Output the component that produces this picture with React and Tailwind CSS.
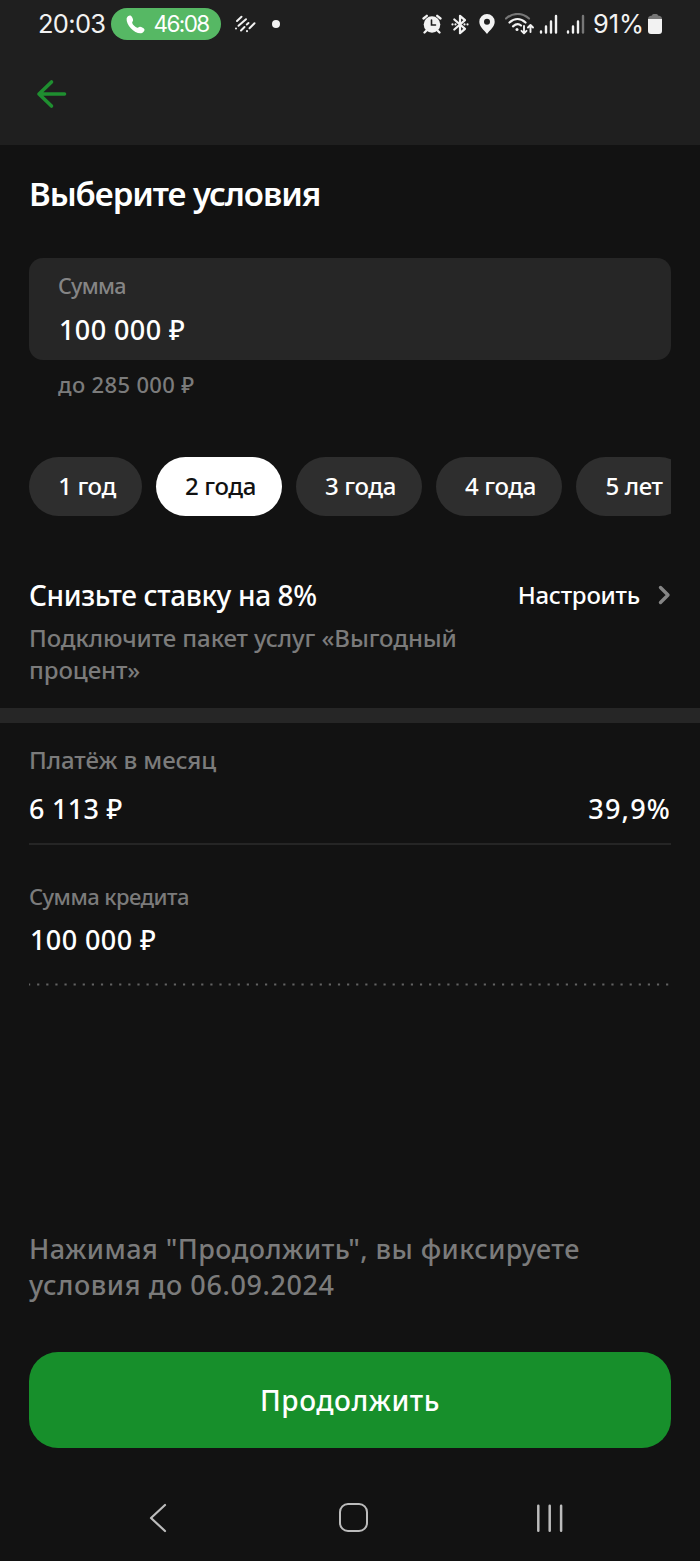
import React from "react";

const chips = [
  { label: "1 год", box: "w-[113px] bg-[#2e2e2e] text-white" },
  { label: "2 года", box: "w-[126px] bg-white text-[#111]" },
  { label: "3 года", box: "w-[126px] bg-[#2e2e2e] text-white" },
  { label: "4 года", box: "w-[126px] bg-[#2e2e2e] text-white" },
  { label: "5 лет", box: "w-[113px] bg-[#2e2e2e] text-white" },
];

function StatusBar() {
  return (
    <div className="flex h-12 items-center pl-[38px] font-['Inter','Roboto',sans-serif] font-normal text-[#f2f2f2]">
      <span className="w-[67px] text-[25.5px] leading-8 tracking-[-0.7px]">20:03</span>
      <div className="ml-[6px] flex h-8 w-[110px] items-center rounded-full bg-[#56b864] pl-[15px] text-white">
        <svg className="h-[19px] w-[19px]" viewBox="0 0 19 19" fill="currentColor">
          <path d="M.6 3.400C1.200 1.500 3 .200 4.500.600C5.900 1.200 7 3.700 7.100 5.100C7.200 6.400 6 7 6.200 7.900C6.800 9.700 9.200 12.100 11.200 12.800C12.200 13 12.900 11.600 14 11.700C15.400 11.800 18.200 13.200 18.500 14.500C18.700 16 17 17.900 15.300 18.200C8.500 19 0 9.800.6 3.400Z" />
        </svg>
        <span className="ml-[8.5px] text-[22.5px] leading-8 tracking-[-1.600px]">46:08</span>
      </div>
      <svg className="ml-[13px] h-[18px] w-[22px]" viewBox="0 0 22 18" fill="none" stroke="currentColor" strokeWidth="2" strokeLinecap="round">
        <path d="M3 6L7.500 1.800M2 13.500V13.400M4.500 10.800L12 4.200M7 15.500L10.500 12M12.800 9.500L14.500 8M13 16.200V16.100M15.500 13.200L20.500 8.200" />
      </svg>
      <div className="ml-4 h-2 w-2 rounded-full bg-[#f2f2f2]" />
      <svg className="ml-[142px] h-5 w-5" viewBox="0 0 20 20" fill="none" stroke="currentColor" strokeLinecap="round">
        <circle cx="10" cy="10.500" r="8.300" fill="currentColor" stroke="none" />
        <path d="M1.500 4.500L4.800 1.800M18.500 4.500L15.200 1.800M2.500 18.500L4.500 16.500M17.500 18.500L15.500 16.500" strokeWidth="2.300" />
        <path d="M9.500 6V11H13.500" stroke="#1f1f1f" strokeWidth="1.600" />
      </svg>
      <svg className="ml-[9px] h-[21px] w-[18px]" viewBox="0 0 18 21" fill="none" stroke="currentColor" strokeWidth="2.200" strokeLinecap="round" strokeLinejoin="round">
        <path d="M3.300 5.500L14 14.800L9 19.200V1.800L14 6.200L3.300 15.500M1.500 10.500V10.400M4.500 10.500V10.400M13.500 10.500V10.400M16.500 10.500V10.400" />
      </svg>
      <svg className="ml-[10px] h-5 w-4" viewBox="0 0 16 20" fill="currentColor">
        <path fillRule="evenodd" d="M8 0A7.700 7.700 0 0 0 .3 7.700C.3 12.500 5 16 8 20C11 16 15.700 12.500 15.700 7.700A7.700 7.700 0 0 0 8 0ZM8 4.800A3 3 0 1 1 8 10.800A3 3 0 1 1 8 4.800Z" />
      </svg>
      <svg className="ml-[10px] h-[22px] w-[29px]" viewBox="0 0 29 22" fill="none" stroke="currentColor" strokeWidth="2.200" strokeLinecap="round" strokeLinejoin="round">
        <path d="M1 5.500C8-.5 17-.5 24 5.500" stroke="#777" />
        <path d="M4.500 9.500C9.500 5 15.500 5 20.500 9.500M8 13.300C11 10.800 14 10.800 16 12.500" />
        <circle cx="12" cy="16.500" r="1.500" fill="currentColor" stroke="none" />
        <path d="M19 13V20M16.500 17.800L19 20.300L21.500 17.800M25.500 19V12.500M23 14.500L25.500 12L28 14.500" strokeWidth="1.900" />
      </svg>
      <svg className="ml-[5px] h-5 w-[19px]" viewBox="0 0 19 20" fill="none" stroke="currentColor" strokeWidth="2.400" strokeLinecap="round">
        <path d="M2 17.500V18.500M7 12.500V18.500M12 7.500V18.500M17 2V18.500" />
      </svg>
      <svg className="ml-2 h-5 w-[19px]" viewBox="0 0 19 20" fill="none" stroke="currentColor" strokeWidth="2.400" strokeLinecap="round">
        <path d="M2 17.500V18.500M7 12.500V18.500M12 7.500V18.500" />
        <path d="M17 2V18.500" stroke="#777" />
      </svg>
      <span className="ml-2 w-[51px] text-[25.5px] leading-8 tracking-[-0.1px]">91%</span>
      <svg className="ml-[4px] h-5 w-[14px]" viewBox="0 0 14 20">
        <path d="M4 1.500Q4 0 5.500 0H8.500Q10 0 10 1.500L12 2Q14 2.500 14 5H0Q0 2.500 2 2Z" fill="#777" />
        <path d="M0 5H14V17Q14 20 11 20H3Q0 20 0 17Z" fill="currentColor" />
      </svg>
    </div>
  );
}

export default function App() {
  return (
    <div className="flex h-[1561px] w-[700px] flex-col overflow-hidden bg-[#121212] font-['Noto_Sans',sans-serif] font-medium whitespace-nowrap text-white">
      <header className="h-[145px] shrink-0 bg-[#1f1f1f]">
        <StatusBar />
        <svg className="mt-[31px] ml-9 h-[30px] w-[31px]" viewBox="0 0 31 30" fill="none" stroke="#1f8f30" strokeWidth="3.600" strokeLinecap="round" strokeLinejoin="round">
          <path d="M15.500 3L3 15L15.500 27M3 15H28.500" />
        </svg>
      </header>

      <main className="px-[29px]">
        <h1 className="mt-[25px] text-[33px] leading-[48px] font-semibold tracking-[-1.050px]">Выберите условия</h1>

        <div className="mt-10 h-[102px] rounded-[14px] bg-[#262626] px-[29px] pt-[13px]">
          <div className="text-[21.5px] leading-[30px] tracking-[-0.700px] text-[#858585]">Сумма</div>
          <div className="mt-[9px] pl-px text-[27px] leading-10 tracking-[0.400px]">100 000 ₽</div>
        </div>
        <div className="mt-[9px] pl-[29px] text-[22px] leading-[30px] tracking-[0.350px] text-[#7b7b7b]">до 285 000 ₽</div>

        <div className="mt-[58px] flex gap-[14px] overflow-hidden">
          {chips.map((c) => (
            <button key={c.label} className={"h-[59px] shrink-0 rounded-full pb-[2px] pl-[3px] text-center text-[24px] leading-[57px] tracking-[-0.350px] " + c.box}>
              {c.label}
            </button>
          ))}
        </div>

        <div className="mt-[61px] flex justify-between leading-9">
          <div className="text-[28px] tracking-[-0.350px]">Снизьте ставку на 8%</div>
          <div className="flex items-center text-[24px]">
            <span className="tracking-[-0.250px]">Настроить</span>
            <svg className="ml-[17px] h-5 w-[14px]" viewBox="0 0 14 20" fill="none" stroke="#858585" strokeWidth="3.400" strokeLinecap="round" strokeLinejoin="round">
              <path d="M3.500 2.500L11 10L3.500 17.500" />
            </svg>
          </div>
        </div>
        <p className="mt-[9px] mb-px text-[24px] leading-8 tracking-[-0.100px] text-[#7b7b7b]">
          Подключите пакет услуг «Выгодный
          <br />
          процент»
        </p>
      </main>

      <div className="mt-[21px] h-[15px] shrink-0 bg-[#262626]" />

      <section className="px-[29px]">
        <div className="mt-[21px] text-[24px] leading-8 tracking-[-0.070px] text-[#7b7b7b]">Платёж в месяц</div>
        <div className="mt-[13px] flex justify-between text-[27px] leading-10">
          <span className="tracking-[0.300px]">6 113 ₽</span>
          <span className="tracking-[1.200px]">39,9%</span>
        </div>
        <div className="mt-[14px] h-[2px] bg-[#252525]" />
        <div className="mt-9 text-[22px] leading-[30px] tracking-[-0.550px] text-[#7b7b7b]">Сумма кредита</div>
        <div className="mt-[9px] pl-px text-[27px] leading-10 tracking-[0.400px]">100 000 ₽</div>
        <svg className="mt-[23px] block h-[3px] w-[642px]" viewBox="0 0 642 3">
          <path d="M0 1.500H642" stroke="#626262" strokeWidth="2" strokeDasharray="2.200 6.915" strokeDashoffset="1" />
        </svg>
      </section>

      <footer className="mt-[245px] px-[29px]">
        <p className="text-[27px] leading-9 tracking-[0.450px] text-[#7b7b7b]">
          Нажимая "Продолжить", вы фиксируете
          <br />
          <span className="tracking-[0.600px]">условия до 06.09.2024</span>
        </p>
        <button className="mt-[49px] h-24 w-full rounded-[29px] bg-[#178f2b] text-[28px] leading-[96px] tracking-[0.550px]">Продолжить</button>
      </footer>

      <nav className="flex h-[113px] items-start pt-[55px] pl-[149px]">
        <svg className="h-[30px] w-[18px]" viewBox="0 0 18 30" fill="none" stroke="#bcbcbc" strokeWidth="2.200" strokeLinecap="round" strokeLinejoin="round">
          <path d="M16 2L2 15L16 28" />
        </svg>
        <div className="ml-[172px] h-[29px] w-[29px] rounded-[9px] border-2 border-[#bcbcbc]" />
        <svg className="ml-[168px] h-[30px] w-7" viewBox="0 0 28 30" fill="none" stroke="#bcbcbc" strokeWidth="2.500" strokeLinecap="round">
          <path d="M2.300 2.700V27.700M13.700 2.700V27.700M25.100 2.700V27.700" />
        </svg>
      </nav>
    </div>
  );
}
